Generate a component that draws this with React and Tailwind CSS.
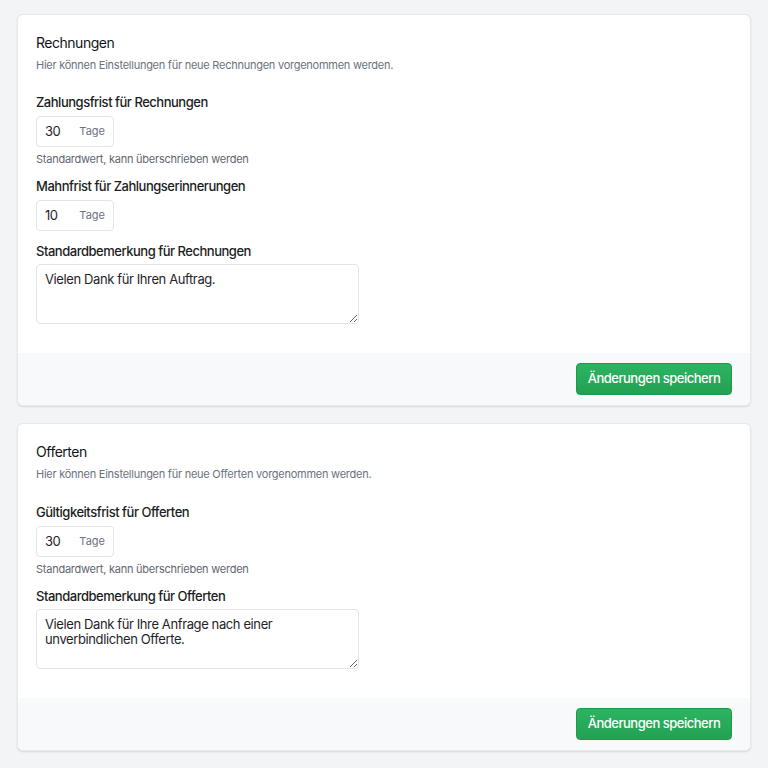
import React from "react";

function DaysInput({ value }) {
  return (
    <div className="flex items-center w-[78px] h-[31px] border border-[#e2e4e8] rounded-[4px] bg-white px-2">
      <span className="text-[13px] text-[#1f2328] w-9">{value}</span>
      <span className="text-[11px] tracking-normal text-[#6b7280]">Tage</span>
    </div>
  );
}

function Remark({ text }) {
  return (
    <textarea
      defaultValue={text}
      className="block w-[323px] h-[60px] border border-[#e2e4e8] rounded-[4px] bg-white px-2 py-[7px] text-[13px] leading-[15px] tracking-[-0.03em] text-[#1f2328] resize-y outline-none"
    />
  );
}

function Card({ title, subtitle, gapTop = "mt-[20px]", children }) {
  return (
    <div className="bg-white rounded-md shadow-[0_1px_2px_rgba(0,0,0,0.12)] border border-[#e8e9ec] overflow-hidden">
      <div className="px-[18px] pt-[18px] pb-[29px]">
        <h3 className="text-[14px] leading-5 text-[#111418]">{title}</h3>
        <p className="mt-[4px] text-[11px] leading-4 tracking-[-0.023em] text-[#6b7280]">{subtitle}</p>
        <div className={gapTop}>{children}</div>
      </div>
      <div className="bg-[#f8f9fa] flex justify-end px-[18px] pt-[10px] pb-[10px]">
        <button className="h-[32px] w-[156px] rounded-[4px] bg-gradient-to-b from-[#2cb462] to-[#22a152] border border-[#1f9a4c] text-white text-[13px] font-medium">
          Änderungen speichern
        </button>
      </div>
    </div>
  );
}

function Label({ children, className = "" }) {
  return <div className={`text-[13px] leading-[18px] font-medium text-[#1a1d21] ${className}`}>{children}</div>;
}

function Hint({ children }) {
  return <div className="mt-[4px] text-[11px] leading-4 tracking-[-0.022em] text-[#5f6670]">{children}</div>;
}

export default function App() {
  return (
    <div
      className="min-h-screen bg-[#f3f4f6] px-[17px] pt-[14px] pb-[18px] flex flex-col gap-[17px] tracking-[-0.03em]"
      style={{ fontFamily: "Inter, 'Liberation Sans', sans-serif" }}
    >
      <Card title="Rechnungen" subtitle="Hier können Einstellungen für neue Rechnungen vorgenommen werden.">
        <Label>Zahlungsfrist für Rechnungen</Label>
        <div className="mt-[5px]"><DaysInput value="30" /></div>
        <Hint>Standardwert, kann überschrieben werden</Hint>
        <Label className="mt-[10px]">Mahnfrist für Zahlungserinnerungen</Label>
        <div className="mt-[5px]"><DaysInput value="10" /></div>
        <Label className="mt-[11px]">Standardbemerkung für Rechnungen</Label>
        <div className="mt-[4px]"><Remark text="Vielen Dank für Ihren Auftrag." /></div>
      </Card>

      <Card title="Offerten" subtitle="Hier können Einstellungen für neue Offerten vorgenommen werden." gapTop="mt-[21px]">
        <Label>Gültigkeitsfrist für Offerten</Label>
        <div className="mt-[5px]"><DaysInput value="30" /></div>
        <Hint>Standardwert, kann überschrieben werden</Hint>
        <Label className="mt-[10px]">Standardbemerkung für Offerten</Label>
        <div className="mt-[4px]"><Remark text="Vielen Dank für Ihre Anfrage nach einer unverbindlichen Offerte." /></div>
      </Card>
    </div>
  );
}
